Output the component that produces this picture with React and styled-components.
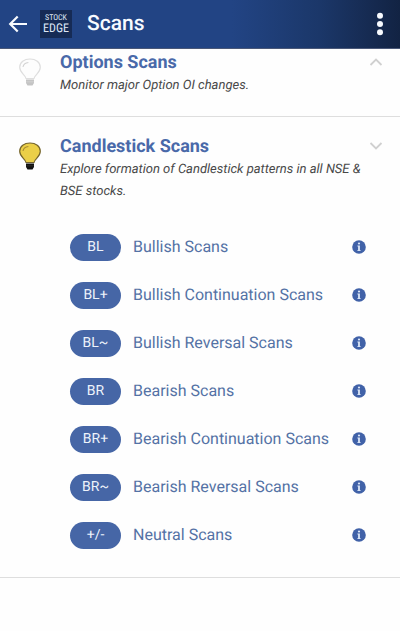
import React from "react";
import styled, { createGlobalStyle } from "styled-components";

const GlobalStyle = createGlobalStyle`
  *, *::before, *::after { box-sizing: border-box; }
  body {
    margin: 0;
    background: #fefefe;
    font-family: Roboto, "Liberation Sans", sans-serif;
    text-rendering: geometricPrecision;
  }
  button { border: 0; padding: 0; background: none; font: inherit; color: inherit; cursor: pointer; }
`;

const TopBar = styled.header`
  display: flex;
  align-items: center;
  height: 49px;
  padding: 0 10px 0 8px;
  color: #f8fbff;
  background: linear-gradient(90deg, #224484 0%, #224484 58%, #1b3769 80%, #172d56 90%, #122343 100%);
  border-bottom: 1px solid #4a5878;
`;

const BarButton = styled.button`
  display: grid;
  place-items: center;
  width: 20px;
  height: 32px;
  svg { display: block; }
`;

const Logo = styled.div`
  display: flex;
  flex-direction: column;
  align-items: center;
  justify-content: center;
  width: 32px;
  height: 28px;
  margin: 0 15px 0 12px;
  background: #162b55;
  color: #dfe8f5;
  font-family: "Roboto Condensed", "Liberation Sans Narrow", "Liberation Sans", sans-serif;
`;

const LogoLine = styled.span`
  font-size: ${({ $large }) => ($large ? "12px" : "8px")};
  line-height: ${({ $large }) => ($large ? "13px" : "9px")};
`;

const PageTitle = styled.h1`
  flex: 1;
  margin: 0;
  font-size: 21px;
  line-height: 28px;
  font-weight: 500;
`;

const Section = styled.section`
  padding: ${({ $scrolled }) => ($scrolled ? "1px" : "17px")} 0 ${({ $open }) => ($open ? "18px" : "19px")};
  border-bottom: 1px solid #dedede;
`;

const SectionHead = styled.div`
  display: grid;
  grid-template-columns: 22px 1fr 14px;
  column-gap: 19px;
  padding: 0 17px 0 19px;
`;

const BulbSlot = styled.div`
  padding-top: 8px;
  svg { display: block; }
`;

const SectionText = styled.div`
  margin-right: -19px;
`;

const SectionTitle = styled.h2`
  margin: 0;
  color: #4969a9;
  font-size: 18px;
  line-height: 25px;
  font-weight: 700;
`;

const SectionNote = styled.p`
  margin: 0;
  color: #484848;
  font-size: 13px;
  line-height: 22px;
  font-style: italic;
`;

const Toggle = styled.button`
  display: grid;
  place-items: center;
  width: 14px;
  height: 24px;
`;

const ScanList = styled.ul`
  list-style: none;
  margin: 0;
  padding: 20px 34px 0 70px;
`;

const ScanRow = styled.li`
  display: flex;
  align-items: center;
  height: 48px;
`;

const ScanLink = styled.a`
  display: flex;
  flex: 1;
  align-items: center;
  gap: 12px;
  color: #5472a5;
  font-size: 16px;
  line-height: 24px;
  text-decoration: none;
`;

const Pill = styled.span`
  width: 51px;
  border-radius: 14px;
  background: #4666a6;
  color: #eef3fb;
  font-size: 14px;
  line-height: 27px;
  text-align: center;
`;

const InfoButton = styled.button`
  display: block;
  width: 14px;
  height: 14px;
  svg { display: block; }
`;

function Bulb({ lit }) {
  const line = lit ? "#75652e" : "#dedede";
  return (
    <svg width="22" height="28" viewBox="0 0 22 28" aria-hidden="true">
      <path
        d="M7 20.5C6.4 16.7 0.7 15.2 0.7 9.3C0.7 4.2 5.3 1 11 1S21.3 4.2 21.3 9.3C21.3 15.2 15.6 16.7 15 20.5Z"
        fill={lit ? "#ebcf48" : "#fdfdfd"}
        stroke={line}
        strokeWidth="1.2"
      />
      <path d="M4 9C4.4 6.5 6.5 4.8 9.4 4.5" fill="none" stroke={lit ? "#a98d32" : "#d2d2d2"} strokeWidth="1.1" />
      <path d="M7 21.5H15V25L13.5 27.5H8.5L7 25Z" fill={lit ? "#111" : "#c4c4c4"} />
      <path d="M7 23.8H15" stroke={lit ? "#3c3a32" : "#dadada"} strokeWidth="0.6" />
    </svg>
  );
}

function Chevron({ up }) {
  return (
    <svg width="14" height="8" viewBox="0 0 14 8" fill="none" stroke="#d0d0d0" strokeWidth="1.8" aria-hidden="true">
      <path d={up ? "M1.5 7L7 1.5L12.5 7" : "M1.5 1L7 6.5L12.5 1"} />
    </svg>
  );
}

function InfoIcon() {
  return (
    <svg width="14" height="14" viewBox="0 0 14 14" aria-hidden="true">
      <circle cx="7" cy="7" r="6.8" fill="#4162a8" />
      <circle cx="7" cy="3.5" r="1.1" fill="#dce7f7" />
      <path d="M5.4 5.5H7.9V10.2H8.7V11.1H5.3V10.2H6.1V6.4H5.4Z" fill="#dce7f7" />
    </svg>
  );
}

const scans = [
  ["BL", "Bullish Scans"],
  ["BL+", "Bullish Continuation Scans"],
  ["BL~", "Bullish Reversal Scans"],
  ["BR", "Bearish Scans"],
  ["BR+", "Bearish Continuation Scans"],
  ["BR~", "Bearish Reversal Scans"],
  ["+/-", "Neutral Scans"],
];

function ScanSection({ title, note, lit, open, scrolled, children }) {
  return (
    <Section $open={open} $scrolled={scrolled}>
      <SectionHead>
        <BulbSlot><Bulb lit={lit} /></BulbSlot>
        <SectionText>
          <SectionTitle>{title}</SectionTitle>
          <SectionNote>{note}</SectionNote>
        </SectionText>
        <Toggle type="button" aria-label={`Toggle ${title}`} aria-expanded={Boolean(open)}>
          <Chevron up={!open} />
        </Toggle>
      </SectionHead>
      {children}
    </Section>
  );
}

export default function App() {
  return (
    <>
      <GlobalStyle />
      <TopBar>
        <BarButton type="button" aria-label="Back">
          <svg width="20" height="18" viewBox="0 0 20 18" fill="none" stroke="currentColor" strokeWidth="2.2">
            <path d="M19 9H2.5M9.7 1.5L2.2 9L9.7 16.5" />
          </svg>
        </BarButton>
        <Logo>
          <LogoLine>STOCK</LogoLine>
          <LogoLine $large>EDGE</LogoLine>
        </Logo>
        <PageTitle>Scans</PageTitle>
        <BarButton type="button" aria-label="More options">
          <svg width="8" height="24" viewBox="0 0 8 24" fill="currentColor">
            <circle cx="4" cy="3.7" r="3" />
            <circle cx="4" cy="12" r="3" />
            <circle cx="4" cy="20.3" r="3" />
          </svg>
        </BarButton>
      </TopBar>
      <main>
        <ScanSection title="Options Scans" note="Monitor major Option OI changes." scrolled />
        <ScanSection
          title="Candlestick Scans"
          note="Explore formation of Candlestick patterns in all NSE & BSE stocks."
          lit
          open
        >
          <ScanList>
            {scans.map(([code, name]) => (
              <ScanRow key={code}>
                <ScanLink href="#">
                  <Pill>{code}</Pill>
                  {name}
                </ScanLink>
                <InfoButton type="button" aria-label={`About ${name}`}><InfoIcon /></InfoButton>
              </ScanRow>
            ))}
          </ScanList>
        </ScanSection>
      </main>
    </>
  );
}
